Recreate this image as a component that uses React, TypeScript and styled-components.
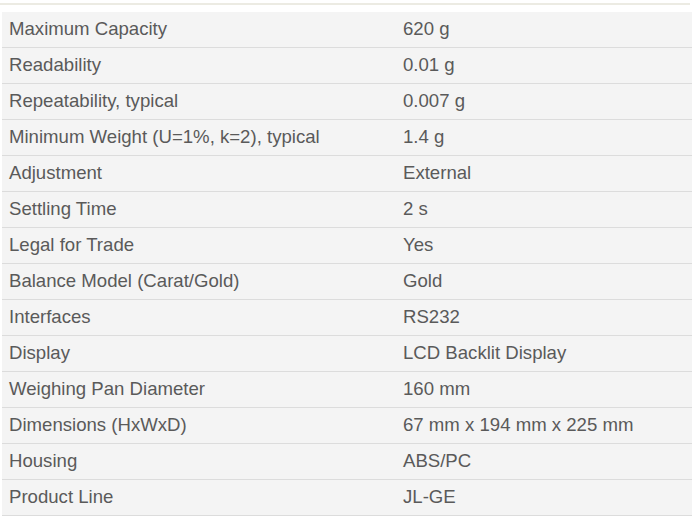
import React from "react";
import styled, { createGlobalStyle } from "styled-components";

const Global = createGlobalStyle`
  html, body { margin: 0; padding: 0; background: #ffffff; }
  body { font-family: "Liberation Sans", Arial, Helvetica, sans-serif; }
`;

const Page = styled.div`
  width: 700px;
  height: 521px;
  padding: 3px 8px 0 2px;
  box-sizing: border-box;
  background: #fff;
  display: flex;
  flex-direction: column;
`;

const TopRule = styled.div`
  height: 2px;
  margin-left: -2px;
  margin-right: 2px;
  background: #ecebe3;
  margin-bottom: 7px;
`;

const Table = styled.div`
  display: grid;
  grid-template-columns: 394px 1fr;
  background: #f4f4f4;
`;

const Cell = styled.div`
  height: 35px;
  box-sizing: border-box;
  height: 36px;
  padding-bottom: 2px;
  border-bottom: 1px solid #dcdcdc;
  display: flex;
  align-items: center;
  padding-left: 7px;
  font-size: 18.6px;
  color: #5a5a5a;
  white-space: nowrap;
`;

const rows: [string, string][] = [
  ["Maximum Capacity", "620 g"],
  ["Readability", "0.01 g"],
  ["Repeatability, typical", "0.007 g"],
  ["Minimum Weight (U=1%, k=2), typical", "1.4 g"],
  ["Adjustment", "External"],
  ["Settling Time", "2 s"],
  ["Legal for Trade", "Yes"],
  ["Balance Model (Carat/Gold)", "Gold"],
  ["Interfaces", "RS232"],
  ["Display", "LCD Backlit Display"],
  ["Weighing Pan Diameter", "160 mm"],
  ["Dimensions (HxWxD)", "67 mm x 194 mm x 225 mm"],
  ["Housing", "ABS/PC"],
  ["Product Line", "JL-GE"],
];

export default function App() {
  return (
    <>
      <Global />
      <Page>
        <TopRule />
        <Table>
          {rows.map(([k, v]) => (
            <React.Fragment key={k}>
              <Cell>{k}</Cell>
              <Cell>{v}</Cell>
            </React.Fragment>
          ))}
        </Table>
      </Page>
    </>
  );
}
